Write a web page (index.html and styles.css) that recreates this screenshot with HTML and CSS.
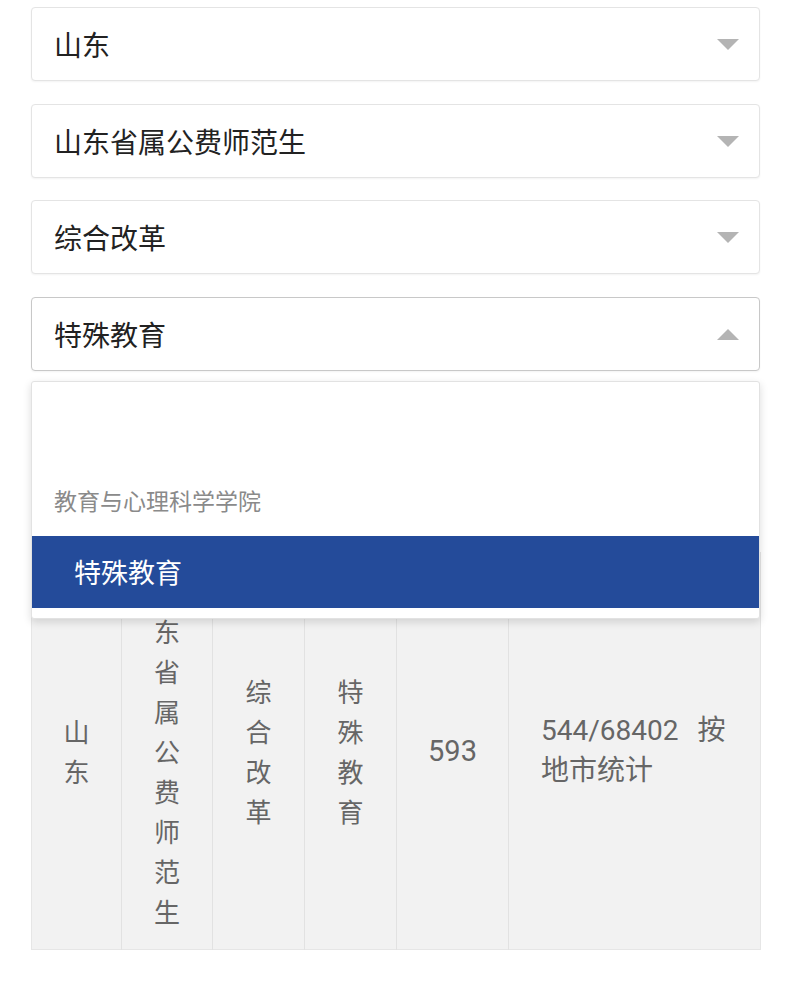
FILE: index.html
```html
<!DOCTYPE html>
<html lang="zh-CN">
<head>
<meta charset="utf-8">
<title>专业选择</title>
<link rel="stylesheet" href="styles.css">
</head>
<body>
<div class="page">
  <div class="field">
    <div class="select"><span class="select-text">山东</span><span class="caret caret-down"></span></div>
  </div>
  <div class="field">
    <div class="select"><span class="select-text">山东省属公费师范生</span><span class="caret caret-down"></span></div>
  </div>
  <div class="field">
    <div class="select"><span class="select-text">综合改革</span><span class="caret caret-down"></span></div>
  </div>
  <div class="field field-open">
    <div class="select select-active"><span class="select-text">特殊教育</span><span class="caret caret-up"></span></div>
    <div class="menu">
      <div class="menu-empty"></div>
      <div class="menu-group">教育与心理科学学院</div>
      <div class="menu-item menu-item-selected">特殊教育</div>
    </div>
  </div>
  <table class="result">
    <colgroup>
      <col class="c1"><col class="c2"><col class="c3"><col class="c4"><col class="c5"><col class="c6">
    </colgroup>
    <tbody>
      <tr>
        <td class="narrow">山东</td>
        <td class="narrow">山东省属公费师范生</td>
        <td class="narrow">综合改革</td>
        <td class="narrow">特殊教育</td>
        <td class="num">593</td>
        <td class="wide">544/68402 按地市统计</td>
      </tr>
    </tbody>
  </table>
</div>
</body>
</html>
```

FILE: styles.css
```css
html, body {
  margin: 0;
  padding: 0;
  background: #ffffff;
}

body {
  font-family: "Noto Sans CJK SC", "Noto Sans", sans-serif;
  color: #222222;
}

.page {
  width: 729px;
  padding: 7px 30px 0 31px;
}

.field {
  margin-bottom: 23px;
}

.field:nth-child(2) {
  margin-bottom: 22px;
}

.field-open {
  position: relative;
  margin-bottom: 0;
}

.select {
  box-sizing: border-box;
  height: 74px;
  display: flex;
  align-items: center;
  justify-content: space-between;
  padding: 0 20px 0 22px;
  border: 1px solid #e4e4e4;
  border-radius: 4px;
  background: #ffffff;
  box-shadow: 0 1px 2px rgba(0, 0, 0, 0.05);
}

.select-active {
  border-color: #c8c8c8;
}

.select-text {
  font-size: 28px;
  line-height: 40px;
  color: #222222;
}

.caret {
  width: 0;
  height: 0;
  border-left: 11px solid transparent;
  border-right: 11px solid transparent;
}

.caret-down {
  border-top: 11px solid #b4b4b4;
}

.caret-up {
  border-bottom: 11px solid #b4b4b4;
}

.menu {
  position: absolute;
  top: 84px;
  left: 0;
  right: 0;
  z-index: 5;
  box-sizing: border-box;
  height: 238px;
  padding-bottom: 10px;
  border: 1px solid #e2e2e2;
  border-radius: 3px;
  background: #ffffff;
  box-shadow: 0 3px 8px rgba(0, 0, 0, 0.14);
}

.menu-empty {
  height: 88px;
}

.menu-group {
  height: 66px;
  line-height: 60px;
  padding-left: 22px;
  font-size: 23px;
  color: #8a8a8a;
}

.menu-item {
  height: 72px;
  line-height: 72px;
  padding-left: 42px;
  font-size: 27px;
}

.menu-item-selected {
  background: #244b9a;
  color: #ffffff;
}

.result {
  margin-top: 181px;
  width: 729px;
  table-layout: fixed;
  border-collapse: collapse;
  background: #f2f2f2;
  border: 1px solid #e6e6e6;
}

.c1 { width: 90px; }
.c2 { width: 91px; }
.c3 { width: 92px; }
.c4 { width: 92px; }
.c5 { width: 112px; }
.c6 { width: 252px; }

.result td {
  padding: 18px 20px;
  border-left: 1px solid #e2e2e2;
  vertical-align: middle;
  font-size: 26px;
  line-height: 40px;
  color: #666666;
  word-break: break-all;
}

.result td:first-child {
  border-left: none;
}

.result td.narrow {
  text-align: center;
  padding: 18px 25px;
}

.result td.num {
  text-align: center;
  padding: 18px 10px;
  font-family: Roboto, "Noto Sans CJK SC", sans-serif;
  font-size: 29px;
}

.result td.wide {
  text-align: left;
  padding: 18px 24px 18px 32px;
  font-family: Roboto, "Noto Sans CJK SC", sans-serif;
  font-size: 28px;
  word-spacing: 12px;
}
```
